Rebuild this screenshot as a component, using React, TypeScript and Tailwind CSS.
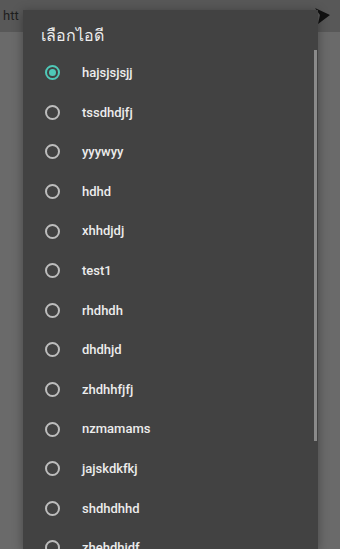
const items = [
  "hajsjsjsjj",
  "tssdhdjfj",
  "yyywyy",
  "hdhd",
  "xhhdjdj",
  "test1",
  "rhdhdh",
  "dhdhjd",
  "zhdhhfjfj",
  "nzmamams",
  "jajskdkfkj",
  "shdhdhhd",
  "zhehdhjdf",
];

export default function App() {
  return (
    <div
      className="relative w-[340px] h-[549px] overflow-hidden bg-[#6a6a6a]"
      style={{ fontFamily: "Roboto, 'Noto Sans', sans-serif" }}
    >
      {/* page behind the dialog */}
      <div className="h-[32px] bg-[#585858] flex items-center justify-between pl-[3px] pr-[8px]">
        <span className="text-[13px] text-[#1e1e1e]">htt</span>
        <svg width="20" height="20" viewBox="0 0 20 20">
          <polygon points="3,2 18,9 6,18 8,9" fill="#111" />
        </svg>
      </div>

      {/* dialog */}
      <div className="absolute left-[23px] top-[10px] bottom-0 w-[295px] bg-[#424242] shadow-[0_2px_10px_rgba(0,0,0,0.35)]">
        <div className="h-[43px] pt-[15px] pl-[18px] text-[16px] leading-[20px] text-[#ededed]" style={{ fontFamily: "'Noto Sans', Roboto, sans-serif" }}>
          เลือกไอดี
        </div>
        <div className="flex flex-col">
          {items.map((name, i) => (
            <div key={name} className="h-[39.6px] flex items-center pl-[22px]">
              {i === 0 ? (
                <div className="w-[15px] h-[15px] rounded-full border-2 border-[#4fc9b8] flex items-center justify-center">
                  <div className="w-[7px] h-[7px] rounded-full bg-[#4fc9b8]" />
                </div>
              ) : (
                <div className="w-[15px] h-[15px] rounded-full border-2 border-[#bdbdbd]" />
              )}
              <span className="ml-[22px] text-[13px] font-medium text-[#ececec]">{name}</span>
            </div>
          ))}
        </div>
        <div className="absolute right-[1px] top-[40px] w-[3px] h-[391px] bg-[#8a8a8a]" />
      </div>
    </div>
  );
}
